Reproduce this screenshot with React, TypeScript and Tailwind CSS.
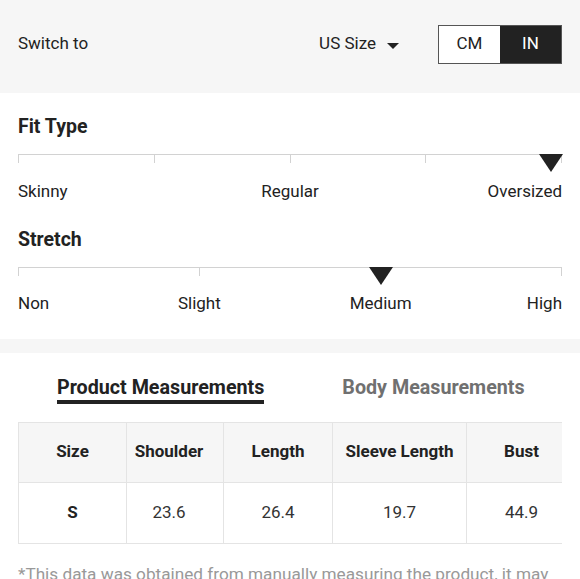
const fitLabels = [
  { text: "Skinny", pos: "left" },
  { text: "Regular", pos: "50%" },
  { text: "Oversized", pos: "right" },
];

const stretchLabels = [
  { text: "Non", pos: "left" },
  { text: "Slight", pos: "33.333%" },
  { text: "Medium", pos: "66.667%" },
  { text: "High", pos: "right" },
];

const columns = [
  { name: "Size", width: 108 },
  { name: "Shoulder", width: 97 },
  { name: "Length", width: 109 },
  { name: "Sleeve Length", width: 134 },
  { name: "Bust", width: 110 },
];

const row = ["S", "23.6", "26.4", "19.7", "44.9"];

function Marker() {
  return (
    <svg width="24" height="18" viewBox="0 0 24 18" className="block">
      <path d="M0 0 L24 0 L12 18 Z" fill="#222" />
    </svg>
  );
}

function Scale({
  ticks,
  labels,
  marker,
  trackHeight,
}: {
  ticks: number;
  labels: { text: string; pos: string }[];
  marker: string;
  trackHeight: string;
}) {
  return (
    <div>
      <div className={`relative ${trackHeight}`}>
        <div className="flex justify-between border-t border-[#d2d2d2]">
          {Array.from({ length: ticks }).map((_, i) => (
            <div key={i} className="w-px h-2 bg-[#d2d2d2]" />
          ))}
        </div>
        {marker === "right" ? (
          <div className="absolute top-0 right-[-1px]">
            <Marker />
          </div>
        ) : (
          <div className="absolute top-0 -translate-x-1/2" style={{ left: marker }}>
            <Marker />
          </div>
        )}
      </div>
      <div className="relative h-6 text-[17px] leading-6 text-[#222]">
        {labels.map((l) =>
          l.pos === "left" ? (
            <span key={l.text} className="absolute left-0 top-0">{l.text}</span>
          ) : l.pos === "right" ? (
            <span key={l.text} className="absolute right-0 top-0">{l.text}</span>
          ) : (
            <span
              key={l.text}
              className="absolute top-0 -translate-x-1/2 whitespace-nowrap"
              style={{ left: l.pos }}
            >
              {l.text}
            </span>
          )
        )}
      </div>
    </div>
  );
}

export default function App() {
  return (
    <div className="w-[580px] h-[579px] overflow-hidden bg-white text-[#222] font-['Roboto',sans-serif]">
      <div className="h-[93px] bg-[#f6f6f6] px-[18px] pb-[5px] flex items-center">
        <span className="text-[17px]">Switch to</span>
        <div className="ml-auto flex items-center">
          <span className="text-[17px]">US Size</span>
          <svg width="12" height="6" viewBox="0 0 12 6" className="ml-[11px] mt-[4px]">
            <path d="M0 0 L12 0 L6 6 Z" fill="#222" />
          </svg>
        </div>
        <div className="ml-[39px] flex h-[39px] border border-[#555]">
          <div className="w-[61px] flex items-center justify-center bg-white text-[17px]">CM</div>
          <div className="w-[61px] flex items-center justify-center bg-[#222] text-white text-[17px]">IN</div>
        </div>
      </div>

      <div className="px-[18px] pt-[22px] pb-[24px]">
        <h3 className="text-[19.5px] leading-6 font-bold">Fit Type</h3>
        <div className="mt-[15px]">
          <Scale ticks={5} labels={fitLabels} marker="right" trackHeight="h-[25px]" />
        </div>
        <h3 className="text-[19.5px] leading-6 font-bold mt-[25px]">Stretch</h3>
        <div className="mt-[15px]">
          <Scale ticks={4} labels={stretchLabels} marker="66.667%" trackHeight="h-[24px]" />
        </div>
      </div>

      <div className="h-[14px] bg-[#f6f6f6]" />

      <div className="px-[18px] pt-[25px]">
        <div className="flex pl-[39px]">
          <div className="text-[19.7px] leading-none font-bold pb-[2px] border-b-4 border-[#222]">
            Product Measurements
          </div>
          <div className="ml-[78px] text-[19.7px] leading-none font-bold text-[#707070]">
            Body Measurements
          </div>
        </div>

        <div className="mt-[18px] overflow-hidden">
          <table className="border-collapse table-fixed w-[558px]">
            <thead>
              <tr className="bg-[#f6f6f6]">
                {columns.map((c, i) => (
                  <th
                    key={c.name}
                    className={`h-[60px] border border-[#e4e4e4] text-[17px] font-bold text-[#222] text-center ${
                      i === 1 ? "pr-[12px]" : ""
                    }`}
                    style={{ width: c.width }}
                  >
                    {c.name}
                  </th>
                ))}
              </tr>
            </thead>
            <tbody>
              <tr>
                {row.map((v, i) => (
                  <td
                    key={i}
                    className={`h-[61px] border border-[#e4e4e4] text-[17px] text-center ${
                      i === 0 ? "font-bold text-[#222]" : "text-[#333]"
                    } ${i === 1 ? "pr-[12px]" : ""}`}
                  >
                    {v}
                  </td>
                ))}
              </tr>
            </tbody>
          </table>
        </div>

        <p className="mt-[18px] text-[17.2px] leading-6 text-[#999]">
          *This data was obtained from manually measuring the product, it may vary by 1-2CM.
        </p>
      </div>
    </div>
  );
}
